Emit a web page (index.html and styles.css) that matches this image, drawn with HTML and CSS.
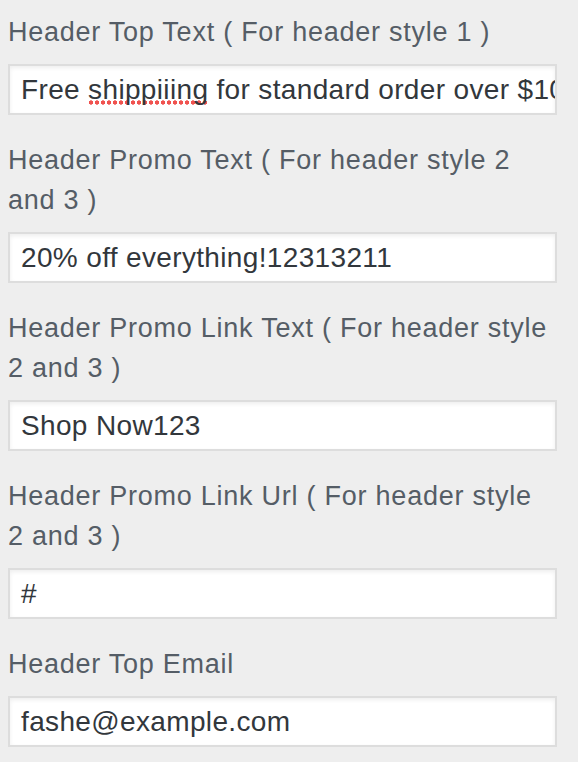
FILE: index.html
```html
<!DOCTYPE html>
<html lang="en">
<head>
<meta charset="utf-8">
<link rel="stylesheet" href="styles.css">
</head>
<body>
<div class="panel">
  <div class="control">
    <label class="label">Header Top Text ( For header style 1 )</label>
    <div class="field" role="textbox">Free <span class="misspelled">shippiiing</span> for standard order over $100</div>
  </div>
  <div class="control">
    <label class="label">Header Promo Text ( For header style 2 and 3 )</label>
    <div class="field" role="textbox">20% off everything!12313211</div>
  </div>
  <div class="control">
    <label class="label">Header Promo Link Text ( For header style 2 and 3 )</label>
    <div class="field" role="textbox">Shop Now123</div>
  </div>
  <div class="control">
    <label class="label">Header Promo Link Url ( For header style 2 and 3 )</label>
    <div class="field" role="textbox">#</div>
  </div>
  <div class="control">
    <label class="label">Header Top Email</label>
    <div class="field" role="textbox">fashe@example.com</div>
  </div>
</div>
</body>
</html>
```

FILE: styles.css
```css
html, body {
  margin: 0;
  padding: 0;
  background: #eeeeee;
}
.panel {
  width: 549px;
  padding: 12px 0 0 8px;
  font-family: "Liberation Sans", Arial, sans-serif;
}
.control {
  display: flex;
  flex-direction: column;
  margin-bottom: 25px;
}
.label {
  display: block;
  max-width: 542px;
  font-size: 27px;
  line-height: 40px;
  letter-spacing: 0.75px;
  color: #555d66;
  margin-bottom: 12px;
}
.field {
  box-sizing: border-box;
  height: 51px;
  border: 2px solid #dddddd;
  background: #ffffff;
  box-shadow: inset 0 2px 4px rgba(0, 0, 0, 0.07);
  padding: 0 11px;
  font-size: 28px;
  line-height: 47px;
  letter-spacing: 0.35px;
  color: #32373c;
  white-space: nowrap;
  overflow: hidden;
}
.misspelled {
  background-image: radial-gradient(circle, #f0524f 1.9px, rgba(240, 82, 79, 0) 2.4px);
  background-size: 6px 5px;
  background-repeat: repeat-x;
  background-position: 0 100%;
}
```
